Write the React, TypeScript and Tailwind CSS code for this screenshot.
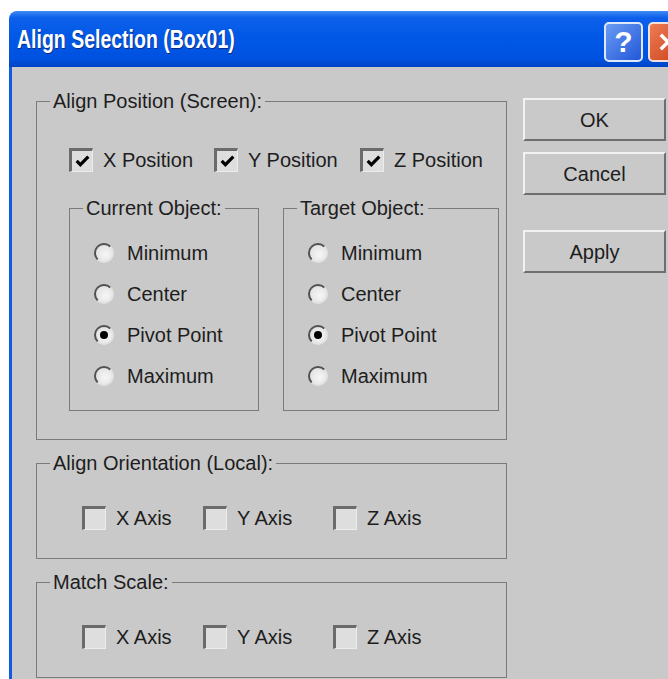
import type { ReactNode } from "react";

const text = "font-['Liberation_Sans',Arial,sans-serif] text-[20px] leading-[22px] text-[#1d1d1d]";

function CheckBox({ checked }: { checked?: boolean }) {
  return (
    <span className="flex h-[24px] w-[24px] shrink-0 items-center justify-center border-t-[3px] border-l-[3px] border-r border-b border-t-[#6b6b6b] border-l-[#6b6b6b] border-r-[#ececec] border-b-[#ececec] bg-[#dedede]">
      {checked && (
        <svg width="17" height="17" viewBox="0 0 16 16">
          <path d="M2.5 7.5 L6 11 L13.5 3.5" fill="none" stroke="#000" strokeWidth="3" />
        </svg>
      )}
    </span>
  );
}

function Check({ label, checked, className = "" }: { label: string; checked?: boolean; className?: string }) {
  return (
    <label className={`flex items-center gap-[10px] ${className}`}>
      <CheckBox checked={checked} />
      <span className="whitespace-nowrap">{label}</span>
    </label>
  );
}

function Radio({ label, on }: { label: string; on?: boolean }) {
  return (
    <div className="flex h-[41px] items-center gap-[13px] pl-[24px]">
      <span className="flex h-[20px] w-[20px] shrink-0 items-center justify-center rounded-full border-2 border-t-[#505050] border-l-[#505050] border-r-[#e2e2e2] border-b-[#e2e2e2] bg-[radial-gradient(circle_at_60%_60%,#f6f6f6,#dcdcdc)]">
        {on && <span className="h-[8px] w-[8px] rounded-full bg-black" />}
      </span>
      <span className="whitespace-nowrap">{label}</span>
    </div>
  );
}

function Group({ title, className = "", children }: { title: string; className?: string; children: ReactNode }) {
  return (
    <fieldset className={`border border-[#7b7b7b] ${className}`}>
      <legend className="ml-[13px] px-[3px]">{title}</legend>
      {children}
    </fieldset>
  );
}

function Button({ label, className = "" }: { label: string; className?: string }) {
  return (
    <button className={`h-[43px] w-[143px] border-2 border-t-[#f2f2f2] border-l-[#f2f2f2] border-r-[#6e6e6e] border-b-[#6e6e6e] bg-[#c9c9c9] text-center ${className}`}>
      {label}
    </button>
  );
}

export default function App() {
  return (
    <div className={`h-[679px] w-[668px] overflow-hidden bg-white pt-[11px] pl-[9px] ${text}`}>
      <div className="flex h-[668px] w-[690px] flex-col">
        {/* title bar */}
        <div className="flex h-[56px] shrink-0 items-center rounded-tl-[8px] bg-[linear-gradient(#3f8af4_0%,#0d60ea_12%,#0057e6_50%,#0052e0_85%,#0044c4_100%)] pl-[8px]">
          <span className="origin-left scale-x-[0.78] font-['Liberation_Sans',Arial,sans-serif] text-[25px] font-bold whitespace-nowrap text-white [text-shadow:1px_1px_0_#0b2a80]">
            Align Selection (Box01)
          </span>
          <div className="mt-[6px] mr-[12px] ml-auto flex gap-[5px]">
            <div className="flex h-[40px] w-[39px] items-center justify-center rounded-[5px] border-2 border-[#dfe8fb] bg-[linear-gradient(135deg,#6b9cf4,#2257d8)] text-[30px] font-bold text-white">
              ?
            </div>
            <div className="flex h-[40px] w-[39px] items-center justify-center rounded-[5px] border-2 border-[#f3e0d8] bg-[linear-gradient(135deg,#ee7b52,#c9411c)]">
              <svg width="20" height="20" viewBox="0 0 20 20">
                <path d="M4 4 L16 16 M16 4 L4 16" stroke="#fff" strokeWidth="3.5" strokeLinecap="square" />
              </svg>
            </div>
          </div>
        </div>

        {/* body */}
        <div className="flex flex-1 border-l-[3px] border-l-[#1558e2] bg-[#c9c9c9] pt-[23px] pl-[24px]">
          <div className="flex flex-col">
            <Group title="Align Position (Screen):" className="h-[350px] w-[471px]">
              <div className="mt-[36px] flex pl-[32px]">
                <Check label="X Position" checked className="w-[145px]" />
                <Check label="Y Position" checked className="w-[146px]" />
                <Check label="Z Position" checked />
              </div>
              <div className="mt-[25px] flex gap-[24px] pl-[32px]">
                <Group title="Current Object:" className="h-[214px] w-[190px]">
                  <div className="pt-[13px]">
                    <Radio label="Minimum" />
                    <Radio label="Center" />
                    <Radio label="Pivot Point" on />
                    <Radio label="Maximum" />
                  </div>
                </Group>
                <Group title="Target Object:" className="h-[214px] w-[216px]">
                  <div className="pt-[13px]">
                    <Radio label="Minimum" />
                    <Radio label="Center" />
                    <Radio label="Pivot Point" on />
                    <Radio label="Maximum" />
                  </div>
                </Group>
              </div>
            </Group>

            <Group title="Align Orientation (Local):" className="mt-[12px] h-[107px] w-[471px]">
              <div className="mt-[32px] flex pl-[45px]">
                <Check label="X Axis" className="w-[121px]" />
                <Check label="Y Axis" className="w-[130px]" />
                <Check label="Z Axis" />
              </div>
            </Group>

            <Group title="Match Scale:" className="mt-[12px] h-[107px] w-[471px]">
              <div className="mt-[32px] flex pl-[45px]">
                <Check label="X Axis" className="w-[121px]" />
                <Check label="Y Axis" className="w-[130px]" />
                <Check label="Z Axis" />
              </div>
            </Group>
          </div>

          <div className="ml-[16px] flex flex-col pt-[8px]">
            <Button label="OK" />
            <Button label="Cancel" className="mt-[11px]" />
            <Button label="Apply" className="mt-[35px]" />
          </div>
        </div>
      </div>
    </div>
  );
}
